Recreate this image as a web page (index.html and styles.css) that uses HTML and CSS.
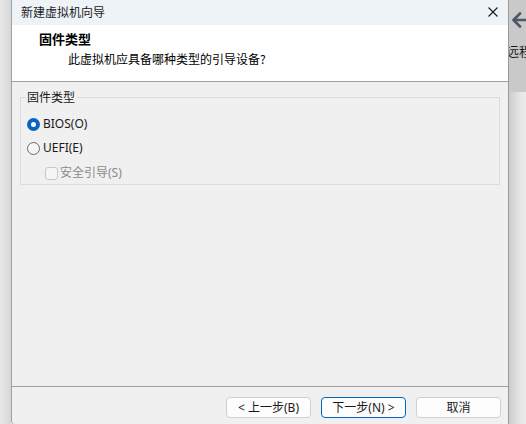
FILE: index.html
```html
<!DOCTYPE html>
<html lang="zh-CN">
<head>
<meta charset="utf-8">
<title>新建虚拟机向导</title>
<link rel="stylesheet" href="styles.css">
</head>
<body>
<div class="screen">
  <div class="left-strip"></div>
  <div class="window">
    <div class="titlebar">
      <span class="title">新建虚拟机向导</span>
      <svg class="close" width="10" height="10" viewBox="0 0 10 10"><path d="M0.5 0.5 L9.5 9.5 M9.5 0.5 L0.5 9.5" stroke="#1a1a1a" stroke-width="1.1" fill="none"/></svg>
    </div>
    <div class="header">
      <div class="h-title">固件类型</div>
      <div class="h-sub">此虚拟机应具备哪种类型的引导设备?</div>
    </div>
    <div class="content">
      <fieldset class="group">
        <legend>固件类型</legend>
        <div class="row radio-row">
          <span class="radio checked"></span><span class="label">BIOS(O)</span>
        </div>
        <div class="row radio-row">
          <span class="radio"></span><span class="label">UEFI(E)</span>
        </div>
        <div class="row check-row">
          <span class="check"></span><span class="label disabled">安全引导(S)</span>
        </div>
      </fieldset>
    </div>
    <div class="footer">
      <button class="btn">&lt; 上一步(B)</button>
      <button class="btn default">下一步(N) &gt;</button>
      <button class="btn">取消</button>
    </div>
  </div>
  <div class="right-strip">
    <div class="rs-top">
      <svg class="back" width="18" height="18" viewBox="0 0 18 18"><path d="M17 9 H2.5 M9 2.5 L2.5 9 L9 15.5" stroke="#4b5866" stroke-width="2.6" fill="none" stroke-linecap="round" stroke-linejoin="round"/></svg>
      <span class="rs-text">远程</span>
    </div>
    <div class="rs-bottom"></div>
  </div>
</div>
</body>
</html>
```
FILE: styles.css
```css
* { box-sizing: border-box; }
html, body { margin: 0; padding: 0; }
body {
  width: 526px;
  height: 424px;
  overflow: hidden;
  font-family: "Segoe UI", "Noto Sans", "Noto Sans CJK SC", sans-serif;
  font-size: 12px;
  color: #1a1a1a;
  background: #e6e6e6;
}
.screen {
  display: flex;
  width: 526px;
  height: 424px;
}
.left-strip {
  width: 11px;
  flex: none;
  background: linear-gradient(to right, #e8e8e8, #d6d6d6);
}
.window {
  width: 498px;
  flex: none;
  height: 424px;
  display: flex;
  flex-direction: column;
  border-left: 1px solid #a2a2a2;
  border-right: 1px solid #9a9a9a;
  border-bottom-left-radius: 4px;
  background: #f0f0f0;
  overflow: hidden;
}
.titlebar {
  height: 25px;
  flex: none;
  background: #eef3f8;
  display: flex;
  align-items: center;
  justify-content: space-between;
  padding: 0 10px 1px 9px;
}
.title {
  font-family: "Noto Sans CJK SC", sans-serif;
  font-size: 12px;
  line-height: 16px;
  color: #1a1a1a;
}
.close { display: block; margin-top: 0; }
.header {
  height: 57px;
  flex: none;
  background: #ffffff;
  border-bottom: 1px solid #a0a0a0;
  padding: 6px 0 0 27px;
}
.h-title {
  font-family: "Noto Sans CJK SC", sans-serif;
  font-weight: bold;
  font-size: 13px;
  line-height: 16px;
  color: #000;
}
.h-sub {
  font-family: "Noto Sans CJK SC", sans-serif;
  font-size: 12px;
  line-height: 16px;
  margin-top: 4px;
  padding-left: 29px;
  color: #000;
}
.content {
  flex: 1;
  padding: 7px 8px 0 8px;
  border-bottom: 1px solid #a0a0a0;
}
.group {
  margin: 0;
  padding: 7px 0 0 5px;
  border: 1px solid #dcdcdc;
  height: 96px;
}
.group legend {
  padding: 0 2px 0 1px;
  font-family: "Noto Sans CJK SC", sans-serif;
  font-size: 12px;
  line-height: 16px;
  color: #1a1a1a;
}
.row {
  display: flex;
  align-items: center;
}
.radio-row {
  height: 24px;
  padding-left: 1px;
}
.check-row {
  height: 20px;
  margin-top: 3px;
  padding-left: 19px;
}
.radio {
  width: 13px;
  height: 13px;
  border-radius: 50%;
  border: 1px solid #6a6a6a;
  background: #f6f6f6;
  flex: none;
  position: relative;
}
.radio.checked {
  border: none;
  background: #0b63c0;
}
.radio.checked::after {
  content: "";
  position: absolute;
  left: 4px;
  top: 4px;
  width: 5px;
  height: 5px;
  border-radius: 50%;
  background: #ffffff;
}
.label {
  margin-left: 3px;
  font-size: 12px;
  line-height: 16px;
  color: #1a1a1a;
}
.check {
  width: 13px;
  height: 13px;
  border: 1px solid #c8c8c8;
  border-radius: 3px;
  background: #f5f5f5;
  flex: none;
}
.label.disabled {
  margin-left: 2px;
  color: #8a8a8a;
}
.footer {
  height: 37px;
  flex: none;
  display: flex;
  justify-content: flex-end;
  gap: 10px;
  padding: 10px 7px 0 0;
}
.btn {
  width: 85px;
  height: 21px;
  border: 1px solid #d0d0d0;
  border-radius: 4px;
  background: #fdfdfd;
  font-family: "Segoe UI", "Noto Sans", "Noto Sans CJK SC", sans-serif;
  font-size: 12px;
  line-height: 16px;
  color: #1a1a1a;
  padding: 0;
}
.btn.default {
  border-color: #0067c0;
}
.right-strip {
  flex: 1;
  display: flex;
  flex-direction: column;
  overflow: hidden;
}
.rs-top {
  height: 92px;
  background: #c9c9c9;
  position: relative;
  flex: none;
}
.back {
  display: block;
  margin: 11px 0 0 2px;
}
.rs-text {
  display: block;
  margin-top: 14px;
  margin-left: -3px;
  white-space: nowrap;
  font-family: "Noto Sans CJK SC", sans-serif;
  font-size: 13px;
  line-height: 16px;
  color: #1a1a1a;
}
.rs-bottom {
  flex: 1;
  background: linear-gradient(to right, #cccccc, #e4e4e4 60%, #ececec);
}
```
